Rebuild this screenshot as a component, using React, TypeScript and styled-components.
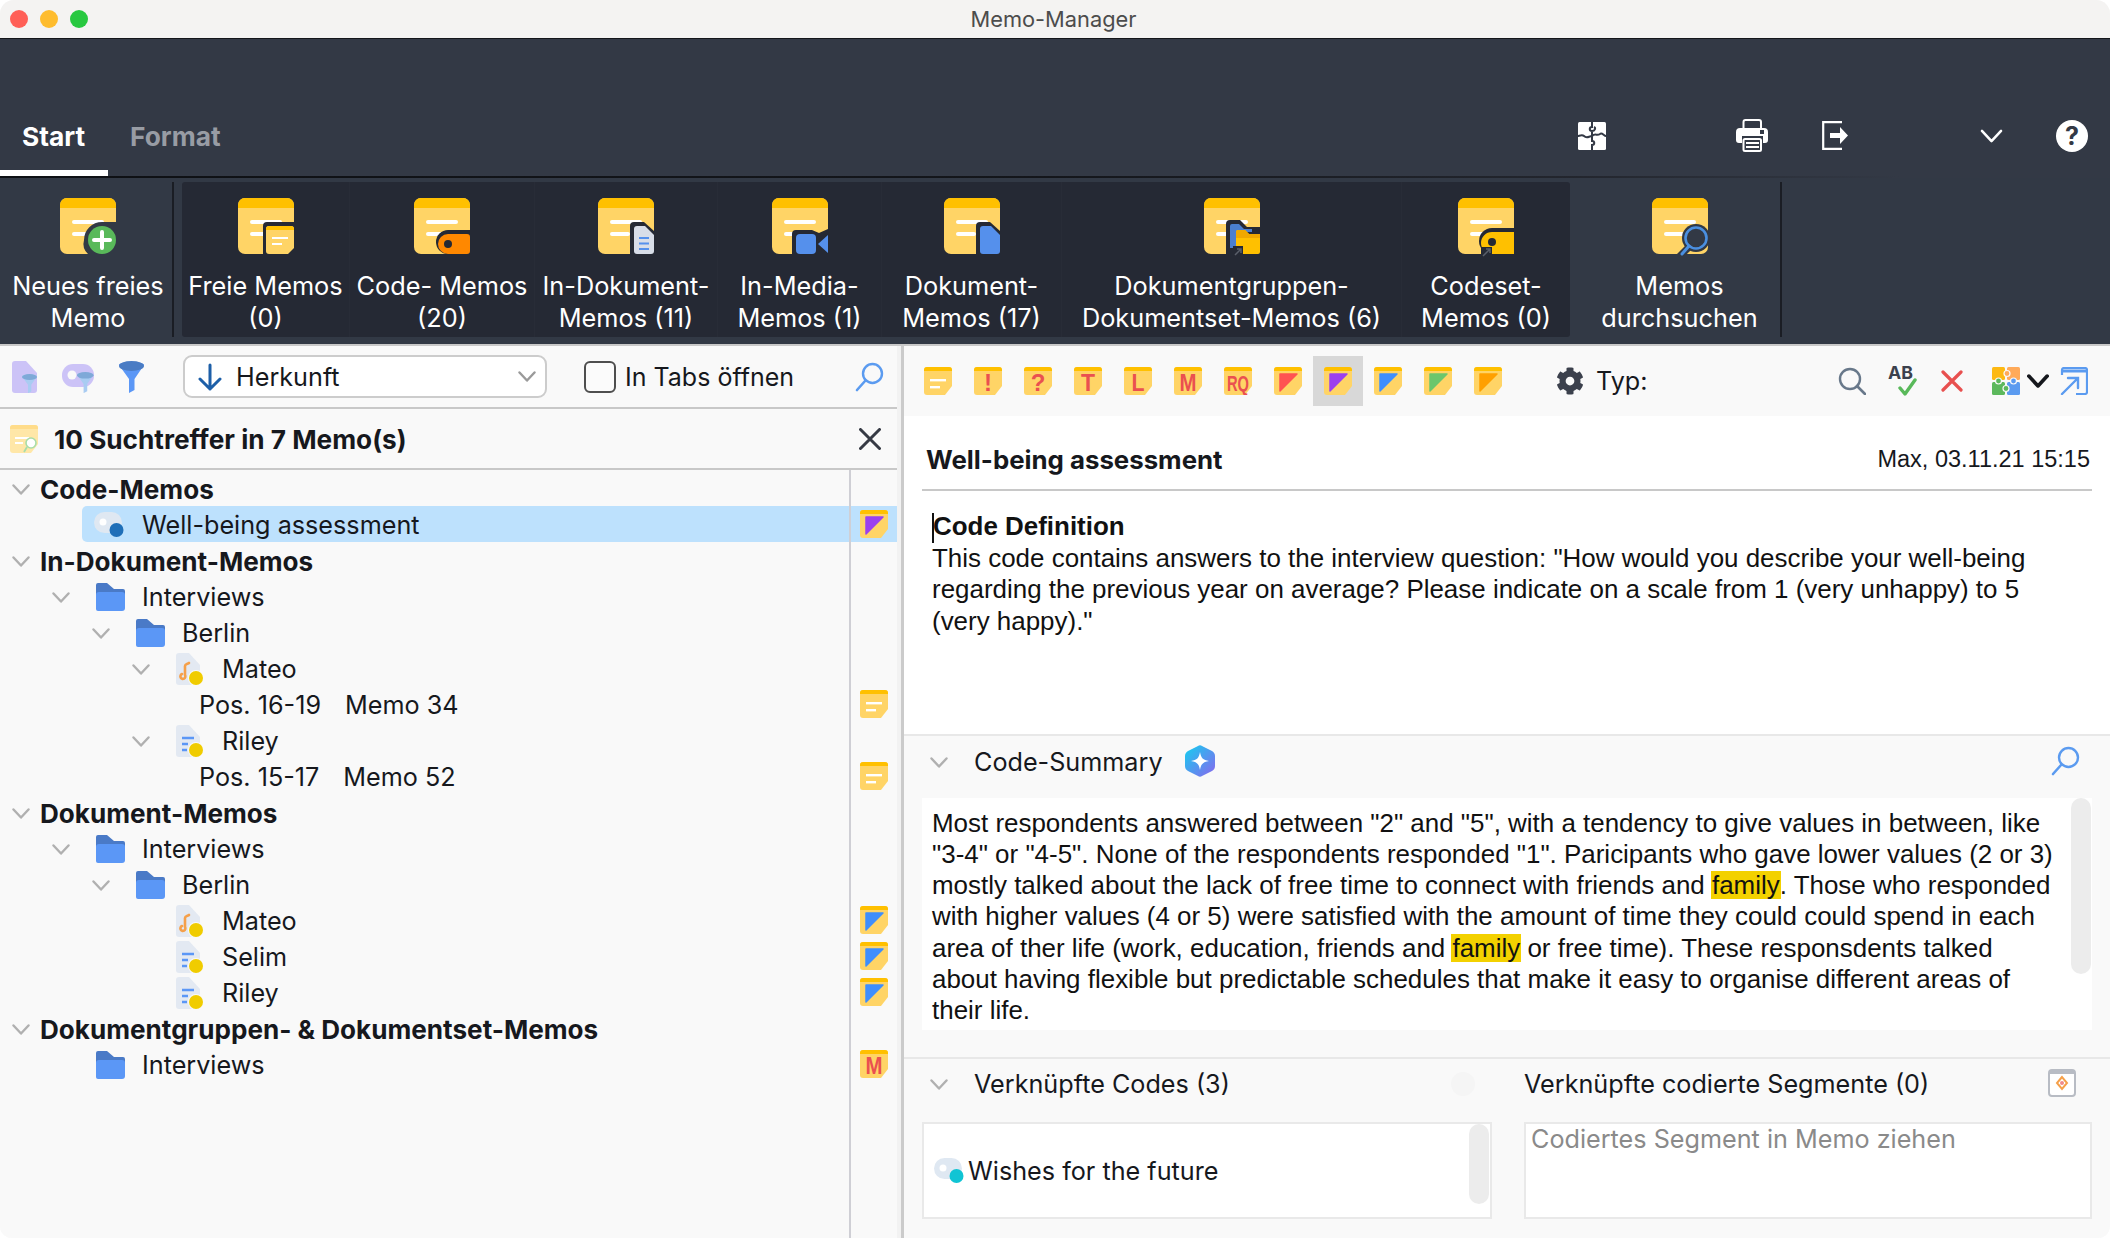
import React from "react";
import styled, { createGlobalStyle } from "styled-components";
import { FaCog } from "react-icons/fa";

const Global = createGlobalStyle`
  html, body { margin: 0; padding: 0; background: #fff; }
  * { box-sizing: border-box; }
  #root { width: 2110px; height: 1238px; }
`;

const Window = styled.div`
  width: 2110px; height: 1238px; display: flex; flex-direction: column; overflow: hidden;
  border-radius: 14px 14px 12px 12px; font-family: Inter, "Liberation Sans", sans-serif; color: #16181d; background: #f9f9f9;
`;
const TitleBar = styled.header`
  height: 39px; flex: none; display: grid; grid-template-columns: 1fr auto 1fr; align-items: center;
  background: #f4f3f2; border-bottom: 1px solid #14161a; padding: 0 10px;
`;
const Lights = styled.div`display: flex; gap: 12px;`;
const Light = styled.span<{ $c: string }>`width: 18px; height: 18px; border-radius: 50%; background: ${p => p.$c};`;
const WinTitle = styled.div`font-size: 21.8px; color: #4c4c4c; margin-right: 3px;`;

const Header = styled.div`
  height: 137px; flex: none; background: #333945; display: flex; align-items: flex-end;
`;
const Tab = styled.div<{ $active?: boolean }>`
  height: 76px; display: flex; align-items: center; padding: 2px 22px 0; font-size: 26.3px; font-weight: 700;
  color: ${p => (p.$active ? "#fff" : "#989ca4")};
  border-bottom: 6px solid ${p => (p.$active ? "#fff" : "transparent")};
  width: ${p => (p.$active ? "108px" : "auto")};
`;
const HeaderTools = styled.div`margin-left: auto; display: flex; align-items: center; height: 76px; padding: 0 22px 5px 0;`;
const ToolSlot = styled.span<{ $ml: number }>`display: flex; margin-left: ${p => p.$ml}px;`;
const HeaderRule = styled.div`height: 2px; flex: none; background: linear-gradient(90deg, #0e1014 0%, #14161b 50%, #23262e 75%, #333945 90%);`;

const Ribbon = styled.nav`
  height: 166px; flex: none; background: #323945; display: flex; padding-top: 4px; align-items: flex-start;
`;
const RibbonGroup = styled.div`display: flex; background: #252934; border-radius: 3px; margin-left: 8px;`;
const RibbonItem = styled.button<{ $w: number; $sep?: boolean; $pl?: number }>`
  all: unset; box-sizing: border-box; width: ${p => p.$w}px; height: 155px; display: flex; flex-direction: column; align-items: center;
  padding: 16px 0 0 ${p => p.$pl ?? 0}px;
  border-right: ${p => (p.$sep ? "1px solid #282c37" : "none")};
`;
const RibbonLabel = styled.span`
  margin-top: 16px; color: #fff; font-size: 25.3px; line-height: 31.5px; text-align: center; white-space: nowrap;
`;
const RibbonDivider = styled.div`width: 2px; height: 155px; flex: none; background: #1a1d24;`;

const Body = styled.main`flex: 1; min-height: 0; display: flex; border-top: 2px solid #c9c9c9;`;
const LeftPane = styled.section`width: 897px; flex: none; display: flex; flex-direction: column; background: #f9f9f9;`;
const Splitter = styled.div`width: 7px; flex: none; background: #f2f2f2; border-right: 3px solid #cbcbcb;`;
const RightPane = styled.section`flex: 1; min-width: 0; display: flex; flex-direction: column; background: #f9f9f9;`;

const FilterBar = styled.div`
  height: 63px; flex: none; display: flex; align-items: center; padding-left: 12px; border-bottom: 2px solid #c8c8c8;
`;
const FilterIcons = styled.div`display: flex; align-items: center; width: 171px;`;
const FilterSlot = styled.span<{ $w: number }>`display: flex; width: ${p => p.$w}px;`;
const SelectBox = styled.div`
  width: 364px; height: 43px; border: 2px solid #cccccc; border-radius: 9px; background: #fff; display: flex; align-items: center;
  padding: 0 9px 0 12px; font-size: 25.2px; gap: 13px;
`;
const SelectCaret = styled.span`margin-left: auto; display: flex;`;
const CheckBox = styled.span`width: 32px; height: 32px; margin-left: 37px; border: 2px solid #4e4e4e; border-radius: 6px; background: #fbfbfb;`;
const CheckLabel = styled.span`margin-left: 9px; font-size: 25px; white-space: nowrap;`;
const BlueLook = styled.span`margin-left: auto; margin-right: 13px; display: flex;`;

const ResultBar = styled.div`
  height: 61px; flex: none; display: flex; align-items: center; padding: 0 16px 0 10px; border-bottom: 2px solid #c8c8c8;
`;
const ResultTitle = styled.div`font-size: 26.2px; font-weight: 700; margin-left: 16px; padding-top: 2px;`;
const CloseSlot = styled.span`margin-left: auto; display: flex;`;

const Tree = styled.div`
  position: relative; flex: 1; padding-top: 0;
  &::after { content: ""; position: absolute; left: 849px; top: 0; bottom: 0; width: 2px; background: #cfcfd5; }
`;
const Row = styled.div<{ $indent: number; $sel?: boolean }>`
  height: 36px; display: flex; align-items: center; margin-left: ${p => p.$indent}px; white-space: nowrap;
  font-size: 25.2px; font-weight: 400; padding-top: 2px;
  ${p => p.$sel && "background: #bde1fd; border-radius: 5px 0 0 5px; padding-left: 12px;"}
`;
const HeadRow = styled(Row)`font-weight: 700; font-size: 26.1px;`;
const ChevSlot = styled.span<{ $w: number }>`width: ${p => p.$w}px; flex: none; display: flex;`;
const IconSlot = styled.span<{ $w: number }>`width: ${p => p.$w}px; flex: none; display: flex;`;
const PosText = styled.span`margin-right: 24px;`;
const Marker = styled.span`margin-left: auto; margin-right: 9px; margin-top: -2px; width: 28px; height: 28px; display: flex;`;

const TypeBar = styled.div`
  height: 70px; flex: none; display: flex; align-items: center; padding-left: 9px;
`;
const TypeCell = styled.span<{ $sel?: boolean }>`
  width: 50px; height: 50px; display: flex; align-items: center; justify-content: center;
  background: ${p => (p.$sel ? "#d8d8d8" : "transparent")};
`;
const GearSlot = styled.span`margin-left: 43px; display: flex; color: #3b404c;`;
const TypLabel = styled.span`margin-left: 12px; font-size: 25.2px;`;
const TypeTools = styled.div`margin-left: auto; display: flex; align-items: center; padding-right: 22px;`;

const MemoPane = styled.article`height: 318px; flex: none; background: #fff; padding: 0 18px;`;
const MemoHead = styled.div`
  display: flex; justify-content: space-between; align-items: center; height: 75px; padding: 27px 2px 14px 5px; border-bottom: 2px solid #c8c8c8;
`;
const MemoTitle = styled.div`font-size: 25.8px; font-weight: 700; margin-left: -1px;`;
const MemoDate = styled.div`font-size: 23.5px; font-family: "Liberation Sans", Arial, sans-serif;`;
const Rich = styled.div`
  font-family: "Liberation Sans", Arial, sans-serif; font-size: 25.94px; line-height: 31.3px; color: #111; white-space: nowrap;
`;
const Editor = styled(Rich)`padding: 20px 0 0 10px;`;
const EditorHead = styled.div`
  font-weight: 700;
  &::before { content: ""; display: inline-block; width: 2px; height: 30px; background: #111; margin-right: -1px; vertical-align: middle; }
`;
const Section = styled.div`border-top: 2px solid #e8e8e8; flex: none;`;
const SectionBar = styled.div<{ $h: number; $pt: number }>`
  height: ${p => p.$h}px; padding: ${p => p.$pt}px 20px 0 26px; display: flex; align-items: flex-start; font-size: 25.2px; line-height: 34px;
`;
const SecChev = styled.span`width: 18px; margin-right: 26px; display: flex; height: 34px; align-items: center;`;
const SecLabel = styled.span<{ $w?: number }>`${p => p.$w && `width: ${p.$w}px; flex: none;`} white-space: nowrap;`;
const SummaryBox = styled(Rich)`
  position: relative; height: 232px; margin: 0 18px 27px; background: #fff; padding: 9.5px 0 0 10px;
`;
const Highlight = styled.mark`background: #f3d100; color: inherit; padding: 0 1px; margin: 0 -1px;`;
const Scroll = styled.span<{ $h: number; $r: number }>`
  position: absolute; top: 0; right: ${p => p.$r}px; width: 20px; height: ${p => p.$h}px; border-radius: 10px; background: #ececec;
`;
const LinkBoxes = styled.div`display: grid; grid-template-columns: 570px 568px; column-gap: 32px; margin: 0 18px; height: 97px;`;
const LinkBox = styled.div`
  position: relative; border: 2px solid #e9e9e9; background: #fff; font-size: 25.2px;
`;
const LinkedCode = styled.div`display: flex; align-items: center; height: 100%; padding: 0 0 0 10px; gap: 2px;`;
const Placeholder = styled.div`color: #8a8a8a; padding: 0 0 0 5px; line-height: 31px;`;
const Faint = styled.span`width: 74px; flex: none; margin-top: 4px; display: flex;`;
const SegIcon = styled.span`margin-left: auto; margin-top: 2px; margin-right: 14px; display: flex;`;
const AiSlot = styled.span`margin-left: 21px; display: flex;`;
const SecLook = styled.span`margin-left: auto; margin-top: 1px; margin-right: 10px; display: flex;`;

/* ---------- drawings ---------- */
const Y = "#FFD466", B = "#FFC000", BLUE = "#5590EC";

const Chevron = ({ c = "#b0b0b0", w = 18, h = 11, sw = 2.4 }: { c?: string; w?: number; h?: number; sw?: number }) => (
  <svg width={w} height={h} viewBox="0 0 18 11"><polyline points="1.5,1.5 9,9.5 16.5,1.5" fill="none" stroke={c} strokeWidth={sw} strokeLinecap="round" strokeLinejoin="round" /></svg>
);

type Kind = "plus" | "free" | "code" | "doc" | "media" | "docfill" | "group" | "set" | "search";
const BigMemo = ({ kind, halo }: { kind: Kind; halo: string }) => (
  <svg width="60" height="60" viewBox="0 0 60 60" style={{ marginRight: -4, marginBottom: -4 }}>
    <path d="M7 0H49a7 7 0 0 1 7 7V49a7 7 0 0 1-7 7H7a7 7 0 0 1-7-7V7a7 7 0 0 1 7-7z" fill={Y} />
    <path d="M7 0H49a7 7 0 0 1 7 7V10H0V7a7 7 0 0 1 7-7z" fill={B} />
    <rect x="12" y="22" width="32" height="4" rx="2" fill="#fff" />
    <rect x="12" y="34" width="20" height="4" rx="2" fill="#fff" />
    {kind === "plus" && <>
      <path d="M42 24a18 18 0 0 0-18 18a14 14 0 0 0 4 14H56V24z" fill={halo} />
      <path d="M42 28a14 14 0 0 1 14 14a14 14 0 0 1-14 14a14 14 0 0 1 0-28z" fill="#59b95a" />
      <path d="M42 34V50M34 42H50" stroke="#fff" strokeWidth="4" strokeLinecap="round" />
    </>}
    {kind === "free" && <>
      <path d="M29 24H56V56H25V28a4 4 0 0 1 4-4z" fill={halo} />
      <path d="M31 28H53a3 3 0 0 1 3 3V50L50 56H31a3 3 0 0 1-3-3V31a3 3 0 0 1 3-3z" fill={Y} />
      <path d="M31 28H53a3 3 0 0 1 3 3V32H28V31a3 3 0 0 1 3-3z" fill={B} />
      <rect x="34" y="39" width="16" height="2" fill="#fff" /><rect x="34" y="45" width="10" height="2" fill="#fff" />
    </>}
    {kind === "code" && <>
      <path d="M34 32H56V56H34a12 12 0 0 1 0-24z" fill={halo} />
      <path d="M34 36H53a3 3 0 0 1 3 3V53a3 3 0 0 1-3 3H34a10 10 0 0 1 0-20z" fill="#FF8800" />
      <circle cx="34" cy="46" r="4" fill={halo} />
    </>}
    {kind === "doc" && <>
      <path d="M36 24H46L56 33V56H32V28a4 4 0 0 1 4-4z" fill={halo} />
      <path d="M39 28H47L56 37V53a3 3 0 0 1-3 3H39a3 3 0 0 1-3-3V31a3 3 0 0 1 3-3z" fill="#D8DDE8" />
      <path d="M41 40H51M41 45.5H51M41 51H51" stroke={BLUE} strokeWidth="2" />
    </>}
    {kind === "media" && <>
      <path d="M24 32H40L47 35L56 31V56H20V36a4 4 0 0 1 4-4z" fill={halo} />
      <rect x="24" y="36" width="20" height="20" rx="4" fill={BLUE} />
      <polygon points="46,46 56,37 56,55" fill={BLUE} />
    </>}
    {kind === "docfill" && <>
      <path d="M36 24H46L56 33V56H32V28a4 4 0 0 1 4-4z" fill={halo} />
      <path d="M39 28H47L56 37V53a3 3 0 0 1-3 3H39a3 3 0 0 1-3-3V31a3 3 0 0 1 3-3z" fill={BLUE} />
    </>}
    {kind === "group" && <>
      <path d="M26 22H36L43 29H56V56H22V26a4 4 0 0 1 4-4z" fill={halo} />
      <path d="M28 26H35L40 31H48V34H32V50H26V28a2 2 0 0 1 2-2z" fill="#4A7FD0" />
      <path d="M34 32H41L45 36H56V54a2 2 0 0 1-2 2H32V34a2 2 0 0 1 2-2z" fill={B} />
      <path d="M34 32H41L45 36H56V40H32V34a2 2 0 0 1 2-2z" fill="#F0A800" />
      <rect x="29" y="48" width="10" height="11" fill={halo} />
      <path d="M31 57L37 51M33 51H37V55" stroke="#5a5f6a" strokeWidth="1.5" fill="none" />
    </>}
    {kind === "set" && <>
      <path d="M34 30H56V56H34a13 13 0 0 1 0-26z" fill={halo} />
      <path d="M34 34H56V56H34a11 11 0 0 1 0-22z" fill={B} />
      <circle cx="34" cy="44" r="4" fill={halo} />
      <rect x="23" y="49" width="11" height="11" fill={halo} />
      <path d="M25 58L32 51M28 51H32V55" stroke="#5a5f6a" strokeWidth="1.5" fill="none" />
    </>}
    {kind === "search" && <>
      <circle cx="44" cy="40" r="14" fill={halo} />
      <path d="M36 50L27 59" stroke={halo} strokeWidth="7" />
      <circle cx="44" cy="40" r="10.5" fill={halo} stroke="#4A8FE0" strokeWidth="2.6" />
      <path d="M37 48L30 56" stroke="#4A8FE0" strokeWidth="3" strokeLinecap="round" />
    </>}
  </svg>
);

const memoBody = "M3 0H25a3 3 0 0 1 3 3V19L21 28H3a3 3 0 0 1-3-3V3a3 3 0 0 1 3-3z";
const memoBand = "M3 0H25a3 3 0 0 1 3 3V4H0V3a3 3 0 0 1 3-3z";
const letterWidths: Record<string, number> = { RQ: 22, M: 17, T: 14, L: 13 };
const SmallMemo = ({ lines, letter, tri, fs = 24 }: { lines?: boolean; letter?: string; tri?: string; fs?: number }) => (
  <svg width="28" height="28" viewBox="0 0 28 28">
    <path d={memoBody} fill={Y} /><path d={memoBand} fill={B} />
    {lines && <><rect x="6" y="12" width="16" height="2.4" fill="#fff" /><rect x="6" y="19" width="10" height="2.4" fill="#fff" /></>}
    {letter && <text x="14" y="24" textAnchor="middle" fontSize={fs} fontWeight="700" fontFamily="Liberation Sans, sans-serif" fill="#EA5050" textLength={letterWidths[letter]} lengthAdjust="spacingAndGlyphs">{letter}</text>}
    {tri && <polygon points="6,7 23,7 6,24" fill={tri} stroke={tri} strokeWidth="1.5" strokeLinejoin="round" />}
  </svg>
);

const Folder = () => (
  <svg width="29" height="28" viewBox="0 0 29 28">
    <path d="M2 0H11L18 6H27a2 2 0 0 1 2 2V12H0V2a2 2 0 0 1 2-2z" fill="#4A7AC7" />
    <path d="M3 9H26a3 3 0 0 1 3 3V25a3 3 0 0 1-3 3H2a2 2 0 0 1-2-2V12a3 3 0 0 1 3-3z" fill="#5B97F6" />
  </svg>
);
const DocIcon = ({ music }: { music?: boolean }) => (
  <svg width="27" height="32" viewBox="0 0 27 32">
    <path d="M3 0H13L24 12V29a3 3 0 0 1-3 3H3a3 3 0 0 1-3-3V3a3 3 0 0 1 3-3z" fill="#E3E9F2" />
    {music
      ? <path d="M9 22V13C9 11 12 11 13 10M9 22a2.5 2.5 0 1 1-3-1" stroke="#F5A04A" strokeWidth="2.6" fill="none" strokeLinecap="round" />
      : <path d="M6 13H18M6 19H12M6 25H11" stroke="#5B97F6" strokeWidth="2.4" />}
    <circle cx="20" cy="25" r="8" fill="#f9f9f9" />
    <circle cx="20" cy="25" r="7" fill="#F0CC00" />
  </svg>
);
const CodePill = ({ dot }: { dot: string }) => (
  <svg width="32" height="26" viewBox="0 0 32 26">
    <rect x="0" y="0" width="28" height="21" rx="10.5" fill="#DFE8F2" />
    <circle cx="9" cy="10" r="3.5" fill="#fff" />
    <circle cx="22.5" cy="18" r="7" fill={dot} />
  </svg>
);
const Look = ({ c = "#5B9BF0" }: { c?: string }) => (
  <svg width="30" height="30" viewBox="0 0 30 30" fill="none"><circle cx="18.5" cy="11.5" r="9.5" stroke={c} strokeWidth="2.4" /><path d="M11.5 18.5L3 28" stroke={c} strokeWidth="2.6" strokeLinecap="round" /></svg>
);
const FunnelPart = ({ x, y, s = 1, top = "#7FA9D8", body = "#A9CCF2" }: { x: number; y: number; s?: number; top?: string; body?: string }) => (
  <g transform={`translate(${x} ${y}) scale(${s})`}>
    <path d="M0 4C0 0 25 0 25 4L15.5 18V29L10 32V18z" fill={body} />
    <ellipse cx="12.5" cy="5" rx="12.5" ry="5" fill={top} />
  </g>
);
const ChevTree = () => <Chevron />;

const PuzzleWhite = () => (
  <svg width="28" height="28" viewBox="0 0 28 28">
    <rect width="28" height="28" rx="1.5" fill="#fff" />
    <path d="M14 0V5C11 5 11 9 14 9V14C11 14 9 17 6 14C4 12 1 14 0 14M14 14V19C17 19 17 23 14 23V28M14 14C17 11 19 14 22 12C24 10 26 14 28 14M14 9C17 9 18 6 16 5" stroke="#333945" strokeWidth="2" fill="none" />
  </svg>
);
const Printer = () => (
  <svg width="32" height="33" viewBox="0 0 32 33">
    <path d="M7.5 11V3a2 2 0 0 1 2-2H23a2 2 0 0 1 2 2V11" stroke="#fff" strokeWidth="2" fill="none" />
    <path d="M4 9H28a4 4 0 0 1 4 4V21a3 3 0 0 1-3 3H27V17H6V24H3a3 3 0 0 1-3-3V13a4 4 0 0 1 4-4z" fill="#fff" />
    <rect x="24" y="11" width="4" height="4" fill="#333945" />
    <rect x="7.5" y="20" width="17.5" height="12" rx="1.5" stroke="#fff" strokeWidth="2" fill="#333945" />
    <path d="M10 24H23M10 28H23" stroke="#fff" strokeWidth="2" />
  </svg>
);
const ExitIcon = () => (
  <svg width="26" height="29" viewBox="0 0 26 29">
    <path d="M20 1.2H1.2V27.8H20" stroke="#fff" strokeWidth="2.2" fill="none" />
    <path d="M8 12H18V6L26 14.5L18 23V17H8z" fill="#fff" />
  </svg>
);
const HelpIcon = () => (
  <svg width="32" height="32" viewBox="0 0 32 32">
    <circle cx="16" cy="16" r="16" fill="#fff" />
    <text x="16" y="25" textAnchor="middle" fontSize="25" fontWeight="700" fontFamily="Inter, sans-serif" fill="#333945">?</text>
  </svg>
);
const ColorPuzzle = () => (
  <svg width="28" height="28" viewBox="0 0 28 28">
    <rect x="0" y="0" width="13" height="13" rx="1.5" fill="#FDB913" />
    <rect x="15" y="0" width="13" height="13" rx="1.5" fill="#FFAA5A" />
    <rect x="0" y="15" width="13" height="13" rx="1.5" fill="#5CB85C" />
    <rect x="15" y="15" width="13" height="13" rx="1.5" fill="#5B9BF0" />
    <circle cx="15" cy="6.5" r="3" fill="#FFAA5A" stroke="#f9f9f9" strokeWidth="1.2" />
    <circle cx="21.5" cy="14" r="3" fill="#5B9BF0" stroke="#f9f9f9" strokeWidth="1.2" />
    <circle cx="6.5" cy="14" r="3" fill="#5CB85C" stroke="#f9f9f9" strokeWidth="1.2" />
    <circle cx="14" cy="21.5" r="3" fill="#5CB85C" stroke="#f9f9f9" strokeWidth="1.2" />
  </svg>
);
const InsertBox = () => (
  <svg width="28" height="28" viewBox="0 0 28 28" fill="none">
    <path d="M2 8V3a2 2 0 0 1 2-2H25a2 2 0 0 1 2 2V25a2 2 0 0 1-2 2H16" stroke="#5B9BF0" strokeWidth="2.2" />
    <path d="M2 4H27" stroke="#5B9BF0" strokeWidth="3" />
    <path d="M2 27L17 12M8 11H18V21" stroke="#5B9BF0" strokeWidth="2.4" strokeLinecap="round" />
  </svg>
);
const AiBadge = () => (
  <svg width="32" height="32" viewBox="0 0 32 32">
    <defs><linearGradient id="aig" x1="0" y1="0" x2="1" y2="1"><stop offset="0" stopColor="#12D0F0" /><stop offset="1" stopColor="#8A66EE" /></linearGradient></defs>
    <path d="M14 1C15 0 17 0 18 1L28 6C30 7 31 9 31 11V21C31 23 30 25 28 26L18 31C17 32 15 32 14 31L4 26C2 25 1 23 1 21V11C1 9 2 7 4 6z" fill="url(#aig)" />
    <path d="M16 7C17 13 19 15 25 16C19 17 17 19 16 25C15 19 13 17 7 16C13 15 15 13 16 7z" fill="#fff" />
  </svg>
);

/* ---------- data ---------- */
const ribbon: { kind: Kind; w: number; l: [string, string] }[] = [
  { kind: "free", w: 168, l: ["Freie Memos", "(0)"] },
  { kind: "code", w: 185, l: ["Code- Memos", "(20)"] },
  { kind: "doc", w: 183, l: ["In-Dokument-", "Memos (11)"] },
  { kind: "media", w: 164, l: ["In-Media-", "Memos (1)"] },
  { kind: "docfill", w: 180, l: ["Dokument-", "Memos (17)"] },
  { kind: "group", w: 340, l: ["Dokumentgruppen-", "Dokumentset-Memos (6)"] },
  { kind: "set", w: 168, l: ["Codeset-", "Memos (0)"] },
];

const types: { lines?: boolean; letter?: string; tri?: string; fs?: number }[] = [
  { lines: true }, { letter: "!" }, { letter: "?" }, { letter: "T" }, { letter: "L" }, { letter: "M" },
  { letter: "RQ", fs: 22 }, { tri: "#FF5252" }, { tri: "#9B40EE" }, { tri: "#3F8EFC" }, { tri: "#6CC66C" }, { tri: "#FFA000" },
];

const summary: React.ReactNode[] = [
  'Most respondents answered between "2" and "5", with a tendency to give values in between, like',
  '"3-4" or "4-5". None of the respondents responded "1". Paricipants who gave lower values (2 or 3)',
  <>mostly talked about the lack of free time to connect with friends and <Highlight>family</Highlight>. Those who responded</>,
  "with higher values (4 or 5) were satisfied with the amount of time they could could spend in each",
  <>area of ther life (work, education, friends and <Highlight>family</Highlight> or free time). These responsdents talked</>,
  "about having flexible but predictable schedules that make it easy to organise different areas of",
  "their life.",
];

const Mk = (p: { lines?: boolean; letter?: string; tri?: string }) => <Marker><SmallMemo {...p} /></Marker>;

const Group = ({ children }: { children: React.ReactNode }) => (
  <HeadRow $indent={12}><ChevSlot $w={28}><ChevTree /></ChevSlot>{children}</HeadRow>
);
const Node = ({ level, chev, icon, text, mk }: { level: number; chev?: boolean; icon: React.ReactNode; text: string; mk?: React.ReactNode }) => (
  <Row $indent={12 + 40 * level}>
    <ChevSlot $w={44}>{chev && <ChevTree />}</ChevSlot>
    <IconSlot $w={46}>{icon}</IconSlot>
    {text}
    {mk}
  </Row>
);
const Pos = ({ pos, memo }: { pos: string; memo: string }) => (
  <Row $indent={199}><PosText>{pos}</PosText>{memo}<Mk lines /></Row>
);

export default function App() {
  return (
    <Window>
      <Global />
      <TitleBar>
        <Lights><Light $c="#FF5F57" /><Light $c="#FEBC2E" /><Light $c="#28C840" /></Lights>
        <WinTitle>Memo-Manager</WinTitle>
      </TitleBar>
      <Header>
        <Tab $active>Start</Tab>
        <Tab>Format</Tab>
        <HeaderTools>
          <ToolSlot $ml={0}><PuzzleWhite /></ToolSlot>
          <ToolSlot $ml={130}><Printer /></ToolSlot>
          <ToolSlot $ml={54}><ExitIcon /></ToolSlot>
          <ToolSlot $ml={130}><Chevron c="#fff" w={27} h={14} sw={2} /></ToolSlot>
          <ToolSlot $ml={51}><HelpIcon /></ToolSlot>
        </HeaderTools>
      </Header>
      <HeaderRule />
      <Ribbon>
        <RibbonItem $w={172} $pl={4}><BigMemo kind="plus" halo="#323945" /><RibbonLabel>Neues freies<br />Memo</RibbonLabel></RibbonItem>
        <RibbonDivider />
        <RibbonGroup>
          {ribbon.map((r, i) => (
            <RibbonItem key={r.kind} $w={r.w} $sep={i < ribbon.length - 1}>
              <BigMemo kind={r.kind} halo="#252934" />
              <RibbonLabel>{r.l[0]}<br />{r.l[1]}</RibbonLabel>
            </RibbonItem>
          ))}
        </RibbonGroup>
        <RibbonItem $w={210} $pl={9}><BigMemo kind="search" halo="#323945" /><RibbonLabel>Memos<br />durchsuchen</RibbonLabel></RibbonItem>
        <RibbonDivider />
      </Ribbon>
      <Body>
        <LeftPane>
          <FilterBar>
            <FilterIcons>
              <FilterSlot $w={50}>
                <svg width="32" height="32" viewBox="0 0 32 32">
                  <path d="M3 0H14L25 12V29a3 3 0 0 1-3 3H3a3 3 0 0 1-3-3V3a3 3 0 0 1 3-3z" fill="#CCC3F7" />
                  <FunnelPart x={10} y={13} s={0.6} />
                </svg>
              </FilterSlot>
              <FilterSlot $w={57}>
                <svg width="33" height="32" viewBox="0 0 33 32">
                  <rect x="0" y="3" width="32" height="23" rx="11" fill="#CCC3F7" />
                  <circle cx="10" cy="14" r="4.5" fill="#f9f9f9" />
                  <FunnelPart x={15} y={11} s={0.66} />
                </svg>
              </FilterSlot>
              <FilterSlot $w={40}>
                <svg width="26" height="32" viewBox="0 0 26 32"><FunnelPart x={0} y={0} s={1} top="#4A7CC4" body="#5B97F6" /></svg>
              </FilterSlot>
            </FilterIcons>
            <SelectBox>
              <svg width="26" height="28" viewBox="0 0 26 28" fill="none"><path d="M13 2V26M3 16L13 26L23 16" stroke="#1D5FA8" strokeWidth="3" strokeLinecap="round" strokeLinejoin="round" /></svg>
              Herkunft
              <SelectCaret><Chevron c="#9a9a9a" /></SelectCaret>
            </SelectBox>
            <CheckBox />
            <CheckLabel>In Tabs öffnen</CheckLabel>
            <BlueLook><Look /></BlueLook>
          </FilterBar>
          <ResultBar>
            <svg width="28" height="28" viewBox="0 0 28 28">
              <path d={memoBody} fill="#FFE7A8" /><path d={memoBand} fill="#FFDC8A" />
              <rect x="5" y="12" width="14" height="2" fill="#fff" /><rect x="5" y="17" width="8" height="2" fill="#fff" />
              <circle cx="21" cy="18" r="5" fill="#fff" stroke="#A9DDA9" strokeWidth="1.6" />
              <path d="M17 22L14 27" stroke="#A9DDA9" strokeWidth="1.8" />
            </svg>
            <ResultTitle>10 Suchtreffer in 7 Memo(s)</ResultTitle>
            <CloseSlot>
              <svg width="22" height="22" viewBox="0 0 22 22"><path d="M1.5 1.5L20.5 20.5M20.5 1.5L1.5 20.5" stroke="#363a44" strokeWidth="3" strokeLinecap="round" /></svg>
            </CloseSlot>
          </ResultBar>
          <Tree>
            <Group>Code-Memos</Group>
            <Row $indent={82} $sel>
              <IconSlot $w={48}><CodePill dot="#1F6FB8" /></IconSlot>
              Well-being assessment
              <Mk tri="#9B40EE" />
            </Row>
            <Group>In-Dokument-Memos</Group>
            <Node level={1} chev icon={<Folder />} text="Interviews" />
            <Node level={2} chev icon={<Folder />} text="Berlin" />
            <Node level={3} chev icon={<DocIcon music />} text="Mateo" />
            <Pos pos="Pos. 16-19" memo="Memo 34" />
            <Node level={3} chev icon={<DocIcon />} text="Riley" />
            <Pos pos="Pos. 15-17" memo="Memo 52" />
            <Group>Dokument-Memos</Group>
            <Node level={1} chev icon={<Folder />} text="Interviews" />
            <Node level={2} chev icon={<Folder />} text="Berlin" />
            <Node level={3} icon={<DocIcon music />} text="Mateo" mk={<Mk tri="#3F8EFC" />} />
            <Node level={3} icon={<DocIcon />} text="Selim" mk={<Mk tri="#3F8EFC" />} />
            <Node level={3} icon={<DocIcon />} text="Riley" mk={<Mk tri="#3F8EFC" />} />
            <Group>Dokumentgruppen- &amp; Dokumentset-Memos</Group>
            <Node level={1} icon={<Folder />} text="Interviews" mk={<Mk letter="M" />} />
          </Tree>
        </LeftPane>
        <Splitter />
        <RightPane>
          <TypeBar>
            {types.map((t, i) => (
              <TypeCell key={i} $sel={i === 8}><SmallMemo {...t} /></TypeCell>
            ))}
            <GearSlot><FaCog size={28} /></GearSlot>
            <TypLabel>Typ:</TypLabel>
            <TypeTools>
              <svg width="28" height="28" viewBox="0 0 28 28" fill="none"><circle cx="12" cy="12" r="10" stroke="#68788A" strokeWidth="2.4" /><path d="M19 19L27 27" stroke="#68788A" strokeWidth="2.6" strokeLinecap="round" /></svg>
              <ToolSlot $ml={22}>
                <svg width="29" height="32" viewBox="0 0 29 32">
                  <text x="0" y="14" fontSize="18" fontWeight="700" fontFamily="Inter, sans-serif" fill="#3B404C" textLength="25" lengthAdjust="spacingAndGlyphs">AB</text>
                  <path d="M12 23L17 29L27 15" stroke="#59B95A" strokeWidth="3.4" fill="none" strokeLinecap="round" strokeLinejoin="round" />
                </svg>
              </ToolSlot>
              <ToolSlot $ml={24}>
                <svg width="22" height="22" viewBox="0 0 22 22"><path d="M2 2L20 20M20 2L2 20" stroke="#E8504F" strokeWidth="3.2" strokeLinecap="round" /></svg>
              </ToolSlot>
              <ToolSlot $ml={29}><ColorPuzzle /></ToolSlot>
              <ToolSlot $ml={7}><Chevron c="#16181D" w={22} h={14} sw={3} /></ToolSlot>
              <ToolSlot $ml={11}><InsertBox /></ToolSlot>
            </TypeTools>
          </TypeBar>
          <MemoPane>
            <MemoHead>
              <MemoTitle>Well-being assessment</MemoTitle>
              <MemoDate>Max, 03.11.21 15:15</MemoDate>
            </MemoHead>
            <Editor>
              <EditorHead>Code Definition</EditorHead>
              <div>This code contains answers to the interview question: "How would you describe your well-being</div>
              <div>regarding the previous year on average? Please indicate on a scale from 1 (very unhappy) to 5</div>
              <div>(very happy)."</div>
            </Editor>
          </MemoPane>
          <Section>
            <SectionBar $h={62} $pt={9}>
              <SecChev><Chevron /></SecChev>
              <SecLabel>Code-Summary</SecLabel>
              <AiSlot><AiBadge /></AiSlot>
              <SecLook><Look /></SecLook>
            </SectionBar>
          </Section>
          <SummaryBox>
            {summary.map((l, i) => <div key={i}>{l}</div>)}
            <Scroll $h={176} $r={1} />
          </SummaryBox>
          <Section>
            <SectionBar $h={63} $pt={8}>
              <SecChev><Chevron /></SecChev>
              <SecLabel $w={476}>Verknüpfte Codes (3)</SecLabel>
              <Faint><svg width="26" height="26" viewBox="0 0 26 26"><circle cx="13" cy="13" r="12" fill="#f5f5f5" /></svg></Faint>
              <SecLabel>Verknüpfte codierte Segmente (0)</SecLabel>
              <SegIcon>
                <svg width="28" height="28" viewBox="0 0 28 28" fill="none">
                  <rect x="1" y="1" width="26" height="26" rx="3" fill="#fff" stroke="#b8bcc4" strokeWidth="2" />
                  <path d="M1 4a3 3 0 0 1 3-3H24a3 3 0 0 1 3 3V5H1z" fill="#b8bcc4" />
                  <path d="M14 8L9 14L14 20L19 14z" stroke="#F5A04A" strokeWidth="2" />
                  <circle cx="14" cy="14" r="2" fill="#F08A8A" />
                </svg>
              </SegIcon>
            </SectionBar>
          </Section>
          <LinkBoxes>
            <LinkBox>
              <LinkedCode><CodePill dot="#10C4D4" />Wishes for the future</LinkedCode>
              <Scroll $h={80} $r={1} />
            </LinkBox>
            <LinkBox><Placeholder>Codiertes Segment in Memo ziehen</Placeholder></LinkBox>
          </LinkBoxes>
        </RightPane>
      </Body>
    </Window>
  );
}
